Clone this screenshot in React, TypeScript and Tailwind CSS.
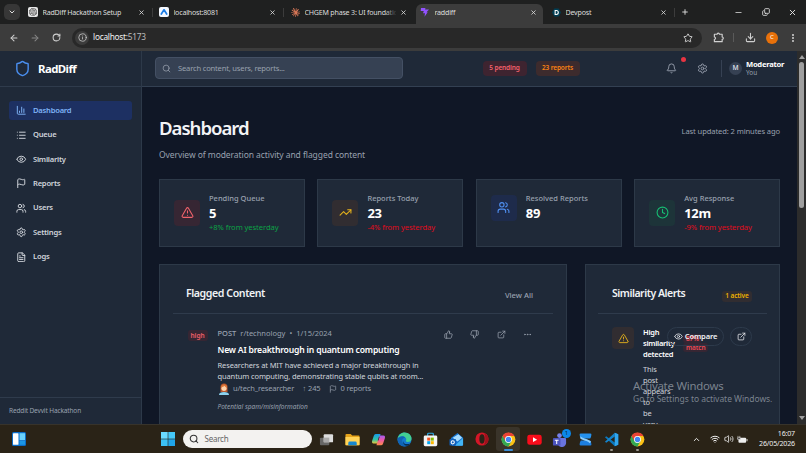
import type { ReactNode } from 'react';
import {
  ArrowLeft,
  ArrowRight,
  Bell,
  ChartColumn,
  ChevronDown,
  ChevronUp,
  Clock,
  Copy,
  Download,
  Ellipsis,
  EllipsisVertical,
  ExternalLink,
  Eye,
  FileText,
  Flag,
  Info,
  List,
  Minus,
  Plus,
  RotateCw,
  Search,
  Settings,
  Shield,
  Star,
  ThumbsDown,
  ThumbsUp,
  TrendingUp,
  TriangleAlert,
  Users,
  Volume2,
  Wifi,
  X,
} from 'lucide-react';
import { SiOpenai, SiClaude } from 'react-icons/si';

const navItems = [
  { label: 'Dashboard', icon: ChartColumn },
  { label: 'Queue', icon: List },
  { label: 'Similarity', icon: Eye },
  { label: 'Reports', icon: Flag },
  { label: 'Users', icon: Users },
  { label: 'Settings', icon: Settings },
  { label: 'Logs', icon: FileText },
];

const stats = [
  { label: 'Pending Queue', value: '5', change: '+8% from yesterday', up: true, icon: TriangleAlert, tone: 'bg-[#362633] text-[#f0626b]' },
  { label: 'Reports Today', value: '23', change: '-4% from yesterday', up: false, icon: TrendingUp, tone: 'bg-[#312d31] text-[#e3b01c]' },
  { label: 'Resolved Reports', value: '89', change: '', up: true, icon: Users, tone: 'bg-[#1e2b4b] text-[#4f8ff0]' },
  { label: 'Avg Response', value: '12m', change: '-9% from yesterday', up: false, icon: Clock, tone: 'bg-[#1d3439] text-[#17bd73]' },
];

const alertText = ['This', 'post', 'appears', 'to', 'be', 'very'];

const ChromeLogo = () => (
  <svg viewBox="0 0 48 48" className="h-[15px] w-[15px]">
    <circle cx="24" cy="24" r="22" fill="#fbc116" />
    <path d="M4.9 13A22 22 0 0 0 24 46l9.5-16.5L24 24Z" fill="#34a853" />
    <path d="M4.9 13A22 22 0 0 1 43.1 13H24L14.5 29.5Z" fill="#ea4335" />
    <circle cx="24" cy="24" r="11" fill="#fff" />
    <circle cx="24" cy="24" r="8.5" fill="#4285f4" />
  </svg>
);

const Tab = ({ icon, title, className = '' }: { icon: ReactNode; title: string; className?: string }) => (
  <div className={`flex h-full items-center ${className}`}>
    <span className="flex h-[10px] w-[10px] shrink-0 items-center justify-center">{icon}</span>
    <span className="ml-[4.5px] flex-1 overflow-hidden whitespace-nowrap text-[7.1px] tracking-[-0.03em] text-[#dddddd]">
      {title}
    </span>
    <X className="ml-1 h-[7px] w-[7px] shrink-0 text-[#dddddd]" strokeWidth={2.8} />
  </div>
);

const TabStrip = () => (
  <div className="flex h-6 items-center bg-[#1f2020]">
    <div className="ml-1 flex h-4 w-4 shrink-0 items-center justify-center rounded-[5px] bg-[#373737]">
      <ChevronDown className="h-2 w-2 text-[#dddddd]" strokeWidth={3} />
    </div>
    <Tab
      className="ml-2 w-[117px] shrink-0"
      title="RadDiff Hackathon Setup"
      icon={
        <span className="flex h-[10px] w-[10px] items-center justify-center rounded-[2px] bg-[#e8e8e8]">
          <SiOpenai className="h-2 w-2 text-[#333333]" />
        </span>
      }
    />
    <div className="ml-[7px] h-[9px] w-px shrink-0 bg-[#3c3c3c]" />
    <Tab
      className="ml-[6px] w-[117px] shrink-0"
      title="localhost:8081"
      icon={
        <svg viewBox="0 0 10 10" className="h-[10px] w-[10px]">
          <rect width="10" height="10" rx="2" fill="#f4f8ff" />
          <path d="M2.3 7 5 2.8 7.7 7" fill="none" stroke="#1b7ce5" strokeWidth="1.7" strokeLinecap="round" strokeLinejoin="round" />
        </svg>
      }
    />
    <div className="ml-[7px] h-[9px] w-px shrink-0 bg-[#3c3c3c]" />
    <div className="relative ml-[6px] h-full w-[117px] shrink-0">
      <Tab
        title="CHGEM phase 3: UI foundation"
        icon={<SiClaude className="h-[9px] w-[9px] text-[#d97757]" />}
      />
      {/* long titles fade out before the close button */}
      <div className="absolute inset-y-0 right-[10px] w-3 bg-gradient-to-r from-transparent to-[#1f2020]" />
    </div>
    <div className="ml-[9px] h-5 w-[127px] shrink-0 self-end rounded-t-[6px] bg-[#3c3c3c] pr-[6px] pl-[4px] pb-1">
      <Tab
        title="raddiff"
        icon={
          <svg viewBox="0 0 10 10" className="h-[10px] w-[10px]">
            <path d="M1 1h4.5L5 2.5h4L6.5 5.2h1.2L4.5 9.7 5 6.3H3L3.8 4H.7Z" fill="#9252ff" />
          </svg>
        }
      />
    </div>
    <Tab
      className="ml-2 w-[116px] shrink-0"
      title="Devpost"
      icon={
        <svg viewBox="0 0 10 10" className="h-[9px] w-[9px]">
          <path d="M2.6.5h4.8L10 5 7.4 9.5H2.6L0 5Z" fill="#003e54" />
          <path d="M3.5 2.8h1.3a2.2 2.2 0 0 1 0 4.4H3.5Z" fill="none" stroke="#fff" strokeWidth="1.2" />
        </svg>
      }
    />
    <div className="ml-[7px] h-[9px] w-px shrink-0 bg-[#3c3c3c]" />
    <Plus className="ml-[6px] h-2 w-2 shrink-0 text-[#dddddd]" strokeWidth={2.8} />
    <div className="ml-auto mr-[9px] flex items-center gap-[18.5px] text-[#e5e5e5]">
      <Minus className="h-[9px] w-[9px]" />
      <Copy className="h-2 w-2 -scale-x-100 rotate-180" strokeWidth={2.5} />
      <X className="h-[9px] w-[9px]" strokeWidth={2.5} />
    </div>
  </div>
);

const Toolbar = () => (
  <div className="flex h-[27px] items-center bg-[#3c3c3c] text-[#d0d0d0]">
    <ArrowLeft className="ml-[9px] h-[10px] w-[10px]" strokeWidth={2.5} />
    <ArrowRight className="ml-[11px] h-[10px] w-[10px] text-[#858585]" strokeWidth={2.5} />
    <RotateCw className="ml-[12px] h-[9px] w-[9px]" strokeWidth={2.8} />
    <div className="ml-[11px] flex h-5 w-[630px] items-center rounded-full bg-[#282828] pl-[3px] pr-[9px]">
      <span className="flex h-[14px] w-[14px] items-center justify-center rounded-full bg-[#3c3c3c]">
        <Info className="h-[9px] w-[9px]" />
      </span>
      <span className="ml-1 text-[8.3px] tracking-[-0.03em] text-[#bcbcbc]">
        <span className="text-[#f0f0f0]">localhost:</span>5173
      </span>
      <Star className="ml-auto h-[10px] w-[10px]" strokeWidth={2.3} />
    </div>
    <svg viewBox="0 0 24 24" className="ml-[11px] h-[11px] w-[11px]" fill="none" stroke="currentColor" strokeWidth="2.5" strokeLinejoin="round">
      <path d="M3 5h6a2.5 2.5 0 0 1 5 0h6v6a2.5 2.5 0 0 1 0 5v5H3v-5a2.5 2.5 0 0 0 0-5Z" />
    </svg>
    <div className="ml-[9px] h-[9px] w-px bg-[#5a5a5a]" />
    <Download className="ml-[11px] h-[11px] w-[11px]" strokeWidth={2.3} />
    <span className="ml-[10px] flex h-3 w-3 items-center justify-center rounded-full bg-[#e8710a] text-[6px] text-white">C</span>
    <EllipsisVertical className="ml-[10px] h-[10px] w-[10px]" strokeWidth={3} />
  </div>
);

const Sidebar = () => (
  <aside className="flex w-[142px] shrink-0 flex-col border-r border-[#2d3949] bg-[#1f2938]">
    <div className="flex h-9 shrink-0 items-center border-b border-[#2f3b4c] pl-[14px]">
      <Shield className="h-[17px] w-[17px] text-[#4a8eee]" />
      <span className="ml-[7px] text-[11.4px] font-bold tracking-[-0.05em] text-white">RadDiff</span>
    </div>
    <nav className="flex flex-1 flex-col gap-[5.4px] pt-[14px] pr-[9px] pl-[9px]">
      {navItems.map(({ label, icon: Icon }, i) => (
        <div
          key={label}
          className={`flex h-[19px] items-center rounded-[3px] pl-[7px] ${i === 0 ? 'bg-[#1d3062] text-[#7fb3f6]' : 'text-[#d1d5dc]'}`}
        >
          <Icon className="h-[10.5px] w-[10.5px]" strokeWidth={2.2} />
          <span className="ml-[6.5px] text-[7.6px] font-semibold tracking-[-0.03em]">{label}</span>
        </div>
      ))}
    </nav>
    <div className="flex h-[27px] shrink-0 items-center border-t border-[#2f3b4c] pl-[9px] text-[6.5px] tracking-[-0.02em] text-[#99a1af]">
      Reddit Devvit Hackathon
    </div>
  </aside>
);

const TopBar = () => (
  <header className="flex h-[35.5px] shrink-0 items-center border-b border-[#334052] bg-[#1f2938] pl-[13px]">
    <div className="flex h-[22px] w-[248px] items-center rounded-[4px] border border-[#445064] bg-[#364153] pl-[6px]">
      <Search className="h-[9px] w-[9px] text-[#99a1af]" />
      <span className="ml-[7px] text-[7.6px] tracking-[-0.025em] text-[#99a1af]">Search content, users, reports...</span>
    </div>
    <span className="ml-[79.5px] flex h-[15px] w-11 items-center justify-center rounded-[4px] bg-[#3e2430] text-[6.5px] font-semibold tracking-[-0.02em] text-[#f4616c]">
      5 pending
    </span>
    <span className="ml-[9px] flex h-[15px] w-11 items-center justify-center rounded-[4px] bg-[#3d2b2d] text-[6.5px] font-semibold tracking-[-0.02em] text-[#f98213]">
      23 reports
    </span>
    <div className="relative ml-[86.5px]">
      <Bell className="h-[11px] w-[11px] text-[#99a1af]" />
      <span className="absolute -top-[6px] left-[15px] h-[5px] w-[5px] rounded-full bg-[#e83442]" />
    </div>
    <Settings className="ml-5 h-[11px] w-[11px] text-[#99a1af]" />
    <div className="ml-[13px] h-[17px] w-px bg-[#364153]" />
    <span className="ml-[7px] flex h-[13px] w-[13px] items-center justify-center rounded-full bg-[#364153] text-[6.6px] font-semibold text-[#d5dae2]">
      M
    </span>
    <div className="ml-[4px] leading-none">
      <p className="text-[7.6px] leading-[9px] font-bold tracking-[-0.035em] text-white">Moderator</p>
      <p className="text-[6.4px] leading-[7px] text-[#99a1af]">You</p>
    </div>
  </header>
);

const StatCards = () => (
  <div className="mt-[18.5px] grid grid-cols-4 gap-[12.6px]">
    {stats.map(({ label, value, change, up, icon: Icon, tone }) => (
      <div key={label} className="h-[68px] border border-[#2d3948] bg-[#1f2938] px-[14px] pt-[13px]">
        <div className="flex items-center">
          <span className={`flex h-[26px] w-[26px] shrink-0 items-center justify-center rounded-[4px] ${tone}`}>
            <Icon className="h-[13px] w-[13px]" />
          </span>
          <div className="ml-[9px] whitespace-nowrap">
            <p className="text-[7.5px] leading-[11px] font-medium text-[#99a1af]">{label}</p>
            <p className="text-[13px] leading-[18px] font-bold tracking-[-0.02em] text-white">{value}</p>
            {change && (
              <p className={`text-[7.6px] leading-[10px] tracking-[-0.01em] ${up ? 'text-[#0ba246]' : 'text-[#e00b1d]'}`}>
                {change}
              </p>
            )}
          </div>
        </div>
      </div>
    ))}
  </div>
);

const FlaggedContent = () => (
  <section className="w-[408px] shrink-0 border border-b-0 border-[#2d3948] bg-[#1f2938] px-[13px]">
    <div className="flex h-[49px] items-center justify-between border-b border-[#2f3b4c] pr-5 pl-[13px]">
      <h2 className="mt-[9px] text-[10.6px] font-semibold tracking-[-0.04em] text-[#f0f2f5]">Flagged Content</h2>
      <span className="mt-[14px] text-[7.6px] font-medium text-[#99a1af]">View All</span>
    </div>
    <div className="flex pt-[13px] pl-[14.5px] whitespace-nowrap">
      <span className="mt-[3px] flex h-[11px] w-5 items-center justify-center rounded-[3px] bg-[#362633] text-[6.5px] font-semibold text-[#ee5e68]">
        high
      </span>
      <div className="ml-[10px] w-[216px]">
        <p className="flex gap-[4px] text-[7.5px] leading-[12px] text-[#99a1af]">
          <span className="font-medium">POST</span>
          <span>r/technology</span>
          <span>•</span>
          <span>1/15/2024</span>
        </p>
        <h3 className="mt-[5px] text-[8.6px] leading-[12px] font-semibold tracking-[-0.021em] text-white">
          New AI breakthrough in quantum computing
        </h3>
        <p className="mt-[4px] text-[7.5px] leading-[11.3px] tracking-[-0.015em] text-[#d1d5dc]">
          Researchers at MIT have achieved a major breakthrough in
          <br />
          quantum computing, demonstrating stable qubits at room...
        </p>
        <div className="flex h-[12px] items-center text-[7.5px] tracking-[-0.02em] text-[#99a1af]">
          <svg viewBox="0 0 12 12" className="h-3 w-3">
            <path d="M2.5 9V4a3.5 3.5 0 0 1 7 0v5Z" fill="#b9572b" />
            <path d="M1 12c0-2.2 2-3 5-3s5 .8 5 3Z" fill="#8cd1ed" />
            <circle cx="6" cy="5.3" r="2.6" fill="#ffd3ac" />
            <path d="M3.4 5C4 3.6 5.6 4 6.6 2.7 7 3.8 8 4 8.7 5l.3-2L6 1.2 3.3 3Z" fill="#e07b3c" />
          </svg>
          <span className="ml-[3.5px]">u/tech_researcher</span>
          <span className="ml-[8.5px]">↑ 245</span>
          <Flag className="ml-[9px] h-2 w-2" />
          <span className="ml-[3px]">0 reports</span>
        </div>
        <p className="mt-[7px] text-[6.5px] leading-[10px] text-[#99a1af] italic">Potential spam/misinformation</p>
      </div>
      <div className="mt-[3px] flex gap-[17.6px] pl-[10px] text-[#99a1af]">
        <ThumbsUp className="h-[9px] w-[9px]" />
        <ThumbsDown className="h-[9px] w-[9px]" />
        <ExternalLink className="h-[9px] w-[9px]" />
        <Ellipsis className="h-[9px] w-[9px]" />
      </div>
    </div>
  </section>
);

const SimilarityAlerts = () => (
  <section className="flex-1 border border-b-0 border-[#2d3948] bg-[#1f2938] px-[12px]">
    <div className="flex h-[49px] items-center justify-between border-b border-[#2f3b4c] pr-[15px] pl-[14px] whitespace-nowrap">
      <h2 className="mt-[9px] text-[10.5px] font-semibold tracking-[-0.045em] text-[#f0f2f5]">Similarity Alerts</h2>
      <span className="mt-[14px] flex h-[11px] w-[30px] items-center justify-center rounded-[3px] bg-[#312d31] text-[6.5px] font-semibold tracking-[-0.02em] text-[#efb100]">
        1 active
      </span>
    </div>
    <div className="relative flex pt-[13px] pl-[14px]">
      <span className="flex h-[22px] w-[22px] items-center justify-center rounded-[4px] bg-[#312d31]">
        <TriangleAlert className="h-[11px] w-[11px] text-[#e3b01c]" />
      </span>
      <div className="ml-[9px] w-[33px] whitespace-nowrap">
        <h3 className="text-[7.5px] leading-[11.1px] font-semibold tracking-[-0.035em] text-white">
          High
          <br />
          similarity
          <br />
          detected
        </h3>
        <p className="mt-[4px] text-[7.5px] leading-[11px] tracking-[-0.02em] text-[#d1d5dc]">
          {alertText.map((word) => (
            <span key={word} className="block">
              {word}
            </span>
          ))}
        </p>
      </div>
      <div className="mt-[6px] ml-[5px] w-[31px] pt-[1px] pl-[2px] text-[6.5px] leading-[9px] font-semibold tracking-[-0.02em] text-[#ee4c58]">
        <span className="rounded-[3px] bg-[#362633] px-[3px] [box-decoration-break:clone]">
          87%
          <br />
          match
        </span>
      </div>
      {/* actions sit over the narrow text column */}
      <div className="absolute top-[13px] right-[15px] flex gap-[6px] text-[#f0f2f5]">
        <button className="flex h-[19px] w-[57px] items-center justify-center gap-[2px] rounded-full border border-[#2d3a4b] text-[7.6px] font-semibold tracking-[-0.02em]">
          <Eye className="h-[9px] w-[9px]" />
          Compare
        </button>
        <button className="flex h-[19px] w-[22px] items-center justify-center rounded-full border border-[#2d3a4b]">
          <ExternalLink className="h-[9px] w-[9px]" />
        </button>
      </div>
    </div>
  </section>
);

const ScrollBar = () => (
  <div className="flex w-[9px] shrink-0 flex-col items-center justify-between bg-[#2c2c2c] py-[4px]">
    <div>
      <div className="mx-auto h-0 w-0 border-x-[3px] border-b-[4px] border-x-transparent border-b-[#a0a0a0]" />
      <div className="mt-[3px] h-[146px] w-[5px] rounded-full bg-[#9f9f9f]" />
    </div>
    <div className="h-0 w-0 border-x-[3px] border-t-[4px] border-x-transparent border-t-[#a0a0a0]" />
  </div>
);

const taskIcons = [
  {
    name: 'tasks',
    art: (
      <svg viewBox="0 0 16 16" className="h-[15px] w-[15px]">
        <rect x="1" y="6" width="10" height="8" rx="1" fill="#666" />
        <rect x="5" y="2.5" width="10" height="8.5" rx="1" fill="#ddd" />
        <path d="M5 6h6v5H5Z" fill="#aaa" />
      </svg>
    ),
  },
  {
    name: 'files',
    art: (
      <svg viewBox="0 0 16 16" className="h-[15px] w-[15px]">
        <path d="M.5 3a1 1 0 0 1 1-1h4.6l1.6 1.8h6.8a1 1 0 0 1 1 1V14H.5Z" fill="#e5a31a" />
        <path d="M.5 5.4h15V13a1 1 0 0 1-1 1h-13a1 1 0 0 1-1-1Z" fill="#ffd358" />
        <path d="M3.5 14v-2.4a1.4 1.4 0 0 1 1.4-1.4h6.2a1.4 1.4 0 0 1 1.4 1.4V14Z" fill="#1687cf" />
      </svg>
    ),
  },
  {
    name: 'copilot',
    art: (
      <svg viewBox="0 0 16 16" className="h-[15px] w-[15px]">
        <defs>
          <linearGradient id="copilotA" x2="0" y2="1">
            <stop stopColor="#1598ed" />
            <stop offset=".6" stopColor="#33c4a4" />
            <stop offset="1" stopColor="#edc83a" />
          </linearGradient>
          <linearGradient id="copilotB" x2="0" y2="1">
            <stop stopColor="#a25cf2" />
            <stop offset=".5" stopColor="#ee5aa2" />
            <stop offset="1" stopColor="#ff8b4a" />
          </linearGradient>
        </defs>
        <path d="M5 2h5.2L7 12.3H2.8C1 12.3.8 10.8 1.2 9.4L3 4Q3.5 2 5 2Z" fill="url(#copilotA)" />
        <path d="M11 14H5.8L9 3.7h4.2c1.8 0 2 1.5 1.6 2.9L13 12q-.5 2-2 2Z" fill="url(#copilotB)" />
        <path d="m7.2 9 1.3-4h.7L8 9Z" fill="#2a2317" />
      </svg>
    ),
  },
  {
    name: 'edge',
    art: (
      <svg viewBox="0 0 16 16" className="h-[15px] w-[15px]">
        <circle cx="8" cy="8" r="7.5" fill="#147bd1" />
        <path d="M.7 7C1.4 3 4.5.5 8 .5c4.4 0 7.5 3 7.5 6.3 0 2.5-2 3.8-4 3.8-2.1 0-2.5-.8-1.8-1.7C10.6 7 8.5 4.8 6 4.8 3.7 4.8 1.5 5.8.7 7Z" fill="#42cf93" />
        <path d="M.6 7.2C2 4.5 6.5 3.6 8.8 6 6.5 6 5.3 7.7 5.5 9.7c.3 2.5 2.5 4.5 5 5.1C5.5 16.5.5 13 .6 7.2Z" fill="#1064b5" />
        <path d="M6.5 9.5c0 2.5 2.5 4.2 7.3 2.9-.5.8-1.5 1.7-2.5 2.2-3 .1-5.5-2.4-4.8-5.1Z" fill="#062d56" />
      </svg>
    ),
  },
  {
    name: 'store',
    art: (
      <svg viewBox="0 0 16 16" className="h-[15px] w-[15px]">
        <path d="M5 5V2.2Q5 1.3 6 1.3h4q1 0 1 .9V5" fill="none" stroke="#2caee9" strokeWidth="1.2" />
        <rect x=".8" y="3.8" width="14.4" height="11.4" rx="1.5" fill="#f5f5f5" />
        <path d="M4.5 6h3.2v3.2H4.5Z" fill="#f25022" />
        <path d="M8.3 6h3.2v3.2H8.3Z" fill="#7fba00" />
        <path d="M4.5 9.8h3.2V13H4.5Z" fill="#00a4ef" />
        <path d="M8.3 9.8h3.2V13H8.3Z" fill="#ffb900" />
      </svg>
    ),
  },
  {
    name: 'outlook',
    art: (
      <svg viewBox="0 0 16 16" className="h-[15px] w-[15px]">
        <path d="M2 6.5 9 1l6 5v7.5a1.2 1.2 0 0 1-1.2 1.2H3Z" fill="#1674d1" />
        <path d="m4 6 6-3.5L14 6l-5 4Z" fill="#a6dcff" />
        <path d="m15 6.3-9 8.4h7.8A1.2 1.2 0 0 0 15 13.5Z" fill="#43b5f5" />
        <rect x=".5" y="7.5" width="7" height="7" rx="1" fill="#0f5eb8" />
        <circle cx="4" cy="11" r="1.7" fill="none" stroke="#fff" strokeWidth="1.1" />
      </svg>
    ),
  },
  {
    name: 'opera',
    art: (
      <svg viewBox="0 0 16 16" className="h-[14px] w-[14px]">
        <circle cx="8" cy="8" r="7.5" fill="#d41627" />
        <path d="M10 1c4 1.6 5.5 4.2 5.5 7s-1.5 5.4-5.5 7c2.5-3.5 2.5-10.5 0-14Z" fill="#9c121c" />
        <ellipse cx="8" cy="8" rx="3" ry="5.3" fill="#2a2317" />
      </svg>
    ),
  },
  { name: 'chrome', art: <ChromeLogo />, active: true },
  {
    name: 'youtube',
    art: (
      <svg viewBox="0 0 16 16" className="h-[15px] w-[15px]">
        <rect x=".3" y="2.8" width="15.4" height="10.8" rx="2.5" fill="#f90d1b" />
        <path d="m6.4 5.7 4.4 2.5-4.4 2.5Z" fill="#fff" />
      </svg>
    ),
  },
  {
    name: 'teams',
    badge: '1',
    art: (
      <svg viewBox="0 0 16 16" className="h-[15px] w-[15px]">
        <circle cx="8" cy="3.8" r="2.5" fill="#7680e8" />
        <path d="M5 6.5h9a1 1 0 0 1 1 1v3.2a4.5 4.5 0 0 1-9 1.5Z" fill="#6a74de" />
        <rect x="1" y="6.5" width="8" height="8" rx="1" fill="#4b53bc" />
        <path d="M3 8.7h4M5 8.7v4" stroke="#fff" strokeWidth="1.1" />
      </svg>
    ),
  },
  {
    name: 'sync',
    art: (
      <svg viewBox="0 0 16 16" className="h-[15px] w-[15px]">
        <path d="M3 1.5h10q1.5 0 1.3 1.5-.2 2.5-1.3 4H3Q1.900 5.500 1.700 3 1.500 1.500 3 1.500Z" fill="#2592ee" />
        <path d="M3 14.500h10q1.500 0 1.300-1.500-.2-2.500-1.300-4H3q-1.100 1.500-1.300 4-.2 1.500 1.300 1.500Z" fill="#1d7fe0" />
        <path d="M2.500 4.500C5 7 11 7 14 10.500l-1.500 1.500C10 9 5 9.500 2.500 7Z" fill="#8ccfff" />
      </svg>
    ),
  },
  {
    name: 'vscode',
    running: true,
    art: (
      <svg viewBox="0 0 16 16" className="h-[15px] w-[15px]">
        <path d="m11.5.8 3.7 1.6v11.2l-3.7 1.6L1 5.7l1.4-1.2 9.1 6.8Z" fill="#0b78bd" />
        <path d="m11.5 4.7-9.1 6.8L1 10.3 11.5.8Z" fill="#1484cc" />
        <path d="m11.5.8 3.7 1.6v11.2l-3.7 1.6Z" fill="#31a5ed" />
      </svg>
    ),
  },
  { name: 'chromeProfile', art: <ChromeLogo />, running: true },
];

const TaskBar = () => (
  <footer className="flex h-[29px] shrink-0 items-center border-t border-[#37332b] bg-[#2a2317]">
    <svg viewBox="0 0 14 14" className="ml-3 h-[14px] w-[14px]">
      <rect width="14" height="14" rx="1.5" fill="#0a6cc7" />
      <rect x="1" y="1.2" width="5.5" height="11.6" rx=".6" fill="#fff" />
      <path d="M7.5 1.2H13v7H7.5Z" fill="#69d1fb" />
      <path d="M7.5 9H13v3.8H7.5Z" fill="#1b96e6" />
    </svg>
    <svg viewBox="0 0 14 14" className="ml-[135px] h-[14px] w-[14px]">
      <path d="M0 0h6.7v6.7H0Z" fill="#6adaff" />
      <path d="M7.3 0H14v6.7H7.3Z" fill="#45c8f8" />
      <path d="M0 7.3h6.7V14H0Z" fill="#3cc1f5" />
      <path d="M7.3 7.3H14V14H7.3Z" fill="#20a5ea" />
    </svg>
    <div className="ml-2 flex h-[18px] w-[129px] items-center rounded-full bg-[#f3f2f0] pl-[6px]">
      <Search className="h-[10px] w-[10px] text-[#333333]" strokeWidth={2.5} />
      <span className="ml-[5.5px] text-[8px] tracking-[-0.03em] text-[#666666]">Search</span>
    </div>
    <div className="ml-[2px] flex">
      {taskIcons.map(({ name, art, active, running, badge }) => (
        <div key={name} className="relative flex h-[26px] w-[25.9px] items-center justify-center">
          {active && <span className="absolute inset-x-[1px] inset-y-[1px] rounded-[3px] bg-[#3a342a]" />}
          <span className="relative">{art}</span>
          {active && <span className="absolute bottom-[1px] h-[2px] w-[9px] rounded-full bg-[#3a8dd6]" />}
          {running && <span className="absolute bottom-[1px] h-[2px] w-[3px] rounded-full bg-[#9b978f]" />}
          {badge && (
            <span className="absolute top-[3px] right-[2px] flex h-[9px] w-[9px] items-center justify-center rounded-full bg-[#0b88ea] text-[6px] text-[#0a2440]">
              {badge}
            </span>
          )}
        </div>
      ))}
    </div>
    <div className="ml-auto flex items-center pr-[11px] text-[#eeeeee]">
      <ChevronUp className="h-[9px] w-[9px]" strokeWidth={2.5} />
      <Wifi className="ml-[9px] h-[10px] w-[10px]" strokeWidth={2.4} />
      <Volume2 className="ml-[4px] h-[10px] w-[10px]" />
      <svg viewBox="0 0 12 10" className="ml-[3px] h-[9px] w-[11px]">
        <rect x="1.5" y="3" width="8.5" height="5.5" rx="1" fill="#eee" />
        <path d="M10.5 4.5h1V7h-1Z" fill="#eee" />
        <path d="M1 1v2M3 1v2M.3 3.2H3.700v1.500H.3Z" stroke="#eee" strokeWidth=".7" />
      </svg>
      <div className="ml-[9px] w-[38px] text-right text-[7.1px] leading-[9.6px] tracking-[-0.025em] whitespace-nowrap">
        <p>16:07</p>
        <p>26/05/2026</p>
      </div>
    </div>
  </footer>
);

const App = () => {
  return (
    <div className="relative flex h-[453px] w-[806px] flex-col overflow-hidden bg-[#101726] font-['Noto_Sans','Open_Sans',sans-serif]">
      <TabStrip />
      <Toolbar />
      <div className="flex h-[373px] shrink-0 overflow-hidden">
        <Sidebar />
        <div className="flex min-w-0 flex-1 flex-col overflow-hidden">
          <TopBar />
          <main className="flex min-h-0 flex-1 flex-col pr-[17px] pl-[17px]">
            <div className="flex h-[74px] shrink-0 items-center justify-between pt-[25px]">
              <div>
                <h1 className="mt-[2px] text-[18.6px] leading-[28px] font-semibold tracking-[-0.055em] text-[#f3f4f6]">Dashboard</h1>
                <p className="mt-[7px] text-[8.5px] leading-[12px] tracking-[-0.008em] text-[#99a1af]">
                  Overview of moderation activity and flagged content
                </p>
              </div>
              <span className="mb-[8px] text-[7.6px] tracking-[-0.015em] text-[#99a1af]">Last updated: 2 minutes ago</span>
            </div>
            <StatCards />
            <div className="mt-[17px] flex min-h-0 flex-1 gap-[18px]">
              <FlaggedContent />
              <SimilarityAlerts />
            </div>
          </main>
        </div>
        <ScrollBar />
      </div>
      <TaskBar />

      {/* Windows activation notice floats above everything */}
      <div className="absolute top-[378px] left-[633px] whitespace-nowrap text-[#9ca3ad]/75">
        <p className="text-[11.4px] leading-[16px] tracking-[-0.02em]">Activate Windows</p>
        <p className="text-[8.5px] leading-[10px] tracking-[-0.005em]">Go to Settings to activate Windows.</p>
      </div>
    </div>
  );
};

export default App;
